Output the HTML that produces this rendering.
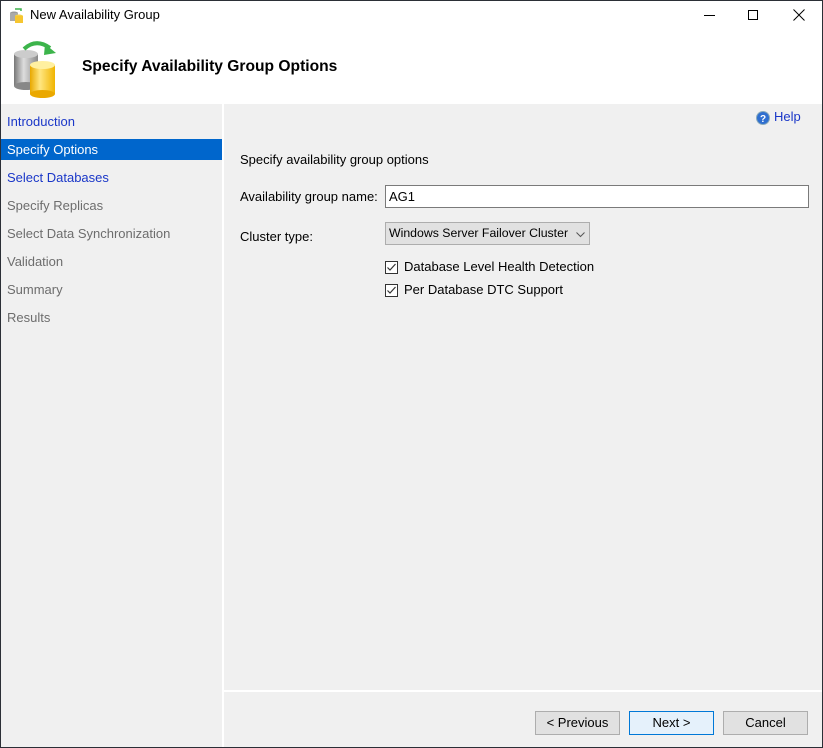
<!DOCTYPE html>
<html><head><meta charset="utf-8"><style>
*{margin:0;padding:0;box-sizing:border-box}
body{width:823px;height:748px;overflow:hidden;font-family:"Segoe UI","Liberation Sans",sans-serif;font-size:13px;color:#000;background:#f0f0f0;position:relative}
.win{position:absolute;left:0;top:0;width:823px;height:748px;background:#f0f0f0}
.frame{position:absolute;left:0;top:0;width:823px;height:748px;border:1px solid #2b2f36;z-index:9}
.title{position:absolute;left:0;top:0;width:823px;height:32px;background:#fff}
.title span{position:absolute;left:30px;top:7px;font-size:13px;color:#000}
.hdr{position:absolute;left:0;top:32px;width:823px;height:72px;background:#fff}
.hdr h1{position:absolute;left:82px;top:26px;font-size:15.6px;font-weight:bold;color:#000}
.left{position:absolute;left:0;top:104px;width:222px;height:644px;background:#f0f0f0}
.sep{position:absolute;left:222px;top:104px;width:2px;height:644px;background:#fff}
.item{position:absolute;left:0;width:222px;height:21px;padding-left:7px;line-height:21px;font-size:13px;color:#6d6d6d}
.item.link{color:#1a37c8}
.item.sel{background:#0066cc;color:#fff}
.foot{position:absolute;left:224px;top:690px;width:599px;height:2px;background:#fff}
.btn{position:absolute;top:711px;width:85px;height:24px;border:1px solid #adadad;background:#e1e1e1;text-align:center;line-height:22px;font-size:13px}
.btn.def{border-color:#0078d7;background:#e5f1fb}
.t{position:absolute;font-size:13px}
.inp{position:absolute;left:385px;top:185px;width:424px;height:23px;border:1px solid #7a7a7a;background:#fff;padding-left:3px;line-height:21px}
.dd{position:absolute;left:385px;top:222px;width:205px;height:23px;border:1px solid #adadad;background:#e1e1e1;padding-left:3px;line-height:21px;font-size:12.3px;white-space:nowrap}
.cb{position:absolute;left:385px;width:13px;height:13px;border:1px solid #333;background:#fff}
</style></head><body>
<div class="win">
<div class="title">
<svg style="position:absolute;left:9px;top:7px" width="16" height="17" viewBox="0 0 16 17"><ellipse cx="5" cy="6" rx="4" ry="1.5" fill="#999"/><rect x="1" y="6" width="8" height="8" fill="#aaa"/><ellipse cx="10" cy="9" rx="4" ry="1.5" fill="#f2d04a"/><rect x="6" y="9" width="8" height="7" fill="#f6c630"/><path d="M6 2 L12 2 L12 4" stroke="#3bb14a" stroke-width="1.5" fill="none"/></svg>
<span>New Availability Group</span>
<div style="position:absolute;left:704px;top:15px;width:11px;height:1px;background:#000"></div>
<div style="position:absolute;left:748px;top:10px;width:10px;height:10px;border:1px solid #000"></div>
<svg style="position:absolute;left:793px;top:9px" width="12" height="12"><path d="M0.5 0.5L11.5 11.5M11.5 0.5L0.5 11.5" stroke="#000" stroke-width="1"/></svg>
</div>
<div class="hdr">
<svg style="position:absolute;left:12px;top:8px" width="52" height="58" viewBox="0 0 52 58">
<defs><linearGradient id="g" x1="0" x2="1"><stop offset="0" stop-color="#777"/><stop offset=".4" stop-color="#ddd"/><stop offset="1" stop-color="#888"/></linearGradient>
<linearGradient id="y" x1="0" x2="1"><stop offset="0" stop-color="#e8a800"/><stop offset=".4" stop-color="#ffe680"/><stop offset="1" stop-color="#f0b400"/></linearGradient></defs>
<rect x="2" y="14" width="24" height="32" fill="url(#g)"/><ellipse cx="14" cy="46" rx="12" ry="4" fill="#888"/><ellipse cx="14" cy="14" rx="12" ry="4" fill="#ccc"/>
<rect x="18" y="25" width="25" height="29" fill="url(#y)"/><ellipse cx="30.5" cy="54" rx="12.5" ry="4" fill="#eaa800"/><ellipse cx="30.5" cy="25" rx="12.5" ry="4" fill="#fff0a0"/>
<path d="M12 9 Q24 -2 38 8" stroke="#3cb44b" stroke-width="4" fill="none"/><path d="M33 4 L44 13 L32 15 Z" fill="#3cb44b"/>
</svg>
<h1>Specify Availability Group Options</h1>
</div>
<div class="left">
<div class="item link" style="top:7px">Introduction</div>
<div class="item sel" style="top:35px">Specify Options</div>
<div class="item link" style="top:63px">Select Databases</div>
<div class="item" style="top:91px">Specify Replicas</div>
<div class="item" style="top:119px">Select Data Synchronization</div>
<div class="item" style="top:147px">Validation</div>
<div class="item" style="top:175px">Summary</div>
<div class="item" style="top:203px">Results</div>
</div>
<div class="sep"></div>
<svg style="position:absolute;left:756px;top:111px" width="14" height="14"><circle cx="7" cy="7" r="6.5" fill="#2f6fd0" stroke="#8ab" stroke-width="1"/><text x="7" y="11" font-size="10" font-weight="bold" fill="#fff" text-anchor="middle" font-family="Liberation Sans">?</text></svg>
<div class="t" style="left:774px;top:109px;color:#1a37c8">Help</div>
<div class="t" style="left:240px;top:152px">Specify availability group options</div>
<div class="t" style="left:240px;top:189px">Availability group name:</div>
<div class="inp">AG1</div>
<div class="t" style="left:240px;top:229px">Cluster type:</div>
<div class="dd">Windows Server Failover Cluster
<svg style="position:absolute;left:190px;top:9px" width="9" height="6"><path d="M0.5 0.5L4.5 4.5L8.5 0.5" stroke="#555" fill="none"/></svg></div>
<div class="cb" style="top:261px"><svg width="11" height="11" style="position:absolute;left:0;top:0"><path d="M1.5 5.5L4 8L9.5 2" stroke="#333" stroke-width="1.2" fill="none"/></svg></div>
<div class="t" style="left:404px;top:259px">Database Level Health Detection</div>
<div class="cb" style="top:284px"><svg width="11" height="11" style="position:absolute;left:0;top:0"><path d="M1.5 5.5L4 8L9.5 2" stroke="#333" stroke-width="1.2" fill="none"/></svg></div>
<div class="t" style="left:404px;top:282px">Per Database DTC Support</div>
<div class="foot"></div>
<div class="btn" style="left:535px">&lt; Previous</div>
<div class="btn def" style="left:629px">Next &gt;</div>
<div class="btn" style="left:723px">Cancel</div>
</div>
<div class="frame"></div>
</body></html>
